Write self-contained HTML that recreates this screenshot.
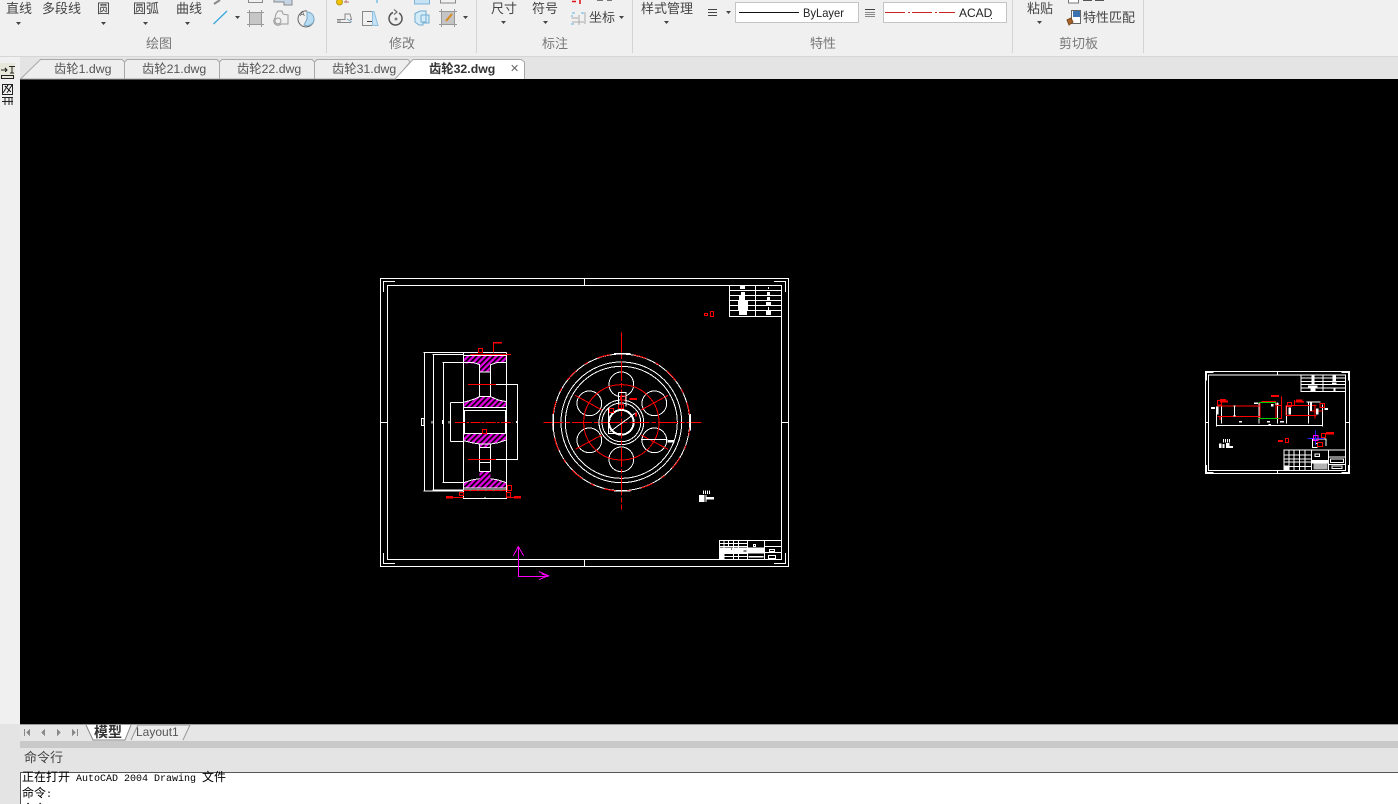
<!DOCTYPE html>
<html lang="zh"><head><meta charset="utf-8"><title>CAD</title>
<style>
html,body{margin:0;padding:0;background:#000}
#p{position:relative;width:1398px;height:804px;overflow:hidden;background:#000;font-family:"Liberation Sans","Noto Sans CJK SC",sans-serif;color:#444}
.a{position:absolute;white-space:nowrap}
.t{font-size:13px;line-height:16px;color:#444}
.g{font-size:13px;line-height:16px;color:#777}
.tab{font-size:12.3px;line-height:16px;color:#555}
.c{position:absolute;left:0;height:16px;line-height:16px;white-space:nowrap}
.c b{font-size:12px;font-weight:400;font-family:"WenQuanYi Zen Hei","Noto Sans CJK SC",sans-serif}
svg{position:absolute;left:0;top:0}
</style></head><body><div id="p">
<div class="a" style="left:0;top:0;width:1398px;height:57px;background:#f0f0f0;border-bottom:1px solid #d6d6d6;box-sizing:border-box"></div>
<div class="a" style="left:0;top:57px;width:1398px;height:22px;background:#e4e4e4"></div>
<div class="a" style="left:0;top:57px;width:20px;height:667px;background:#f0f0f0"></div>
<div class="a" style="left:0;top:724px;width:1398px;height:17px;background:#e6e6e6"></div>
<div class="a" style="left:0;top:741px;width:1398px;height:7px;background:#c9c9c9"></div>
<div class="a" style="left:0;top:748px;width:1398px;height:24px;background:#e4e4e4"></div>
<div class="a" style="left:0;top:724px;width:20px;height:80px;background:#e4e4e4"></div>
<div class="a" style="left:20px;top:772px;width:1378px;height:32px;background:#fff;border-top:1px solid #555;box-sizing:border-box"></div>

<svg width="1398" height="804" viewBox="0 0 1398 804" style="pointer-events:none">
<g stroke="#d4d4d4" fill="none" shape-rendering="crispEdges">
<path d="M326.500 0V53M476.500 0V53M632.500 0V53M1012.500 0V53M1143.500 0V53"/>
</g>
<!-- tabs -->
<g stroke="#a8a8a8" fill="#eeeeee">
<path d="M20.500 79 L40.500 59.500 H122 L124.500 62 V79Z" />
<path d="M124.500 79 V62 L127 59.500 H217 L219.500 62 V79Z"/>
<path d="M219.500 79 V62 L222 59.500 H312 L314.500 62 V79Z"/>
<path d="M314.500 79 V62 L317 59.500 H408 L410 62 L396 79Z"/>
</g>
<path d="M395 79 L413 59.500 H521 L524.500 62 V79" fill="#fff" stroke="#a8a8a8"/>
<!-- icons -->
<g fill="none" stroke="#8a8a8a" stroke-width="1">
<path d="M214 4 L220 0" stroke="#888" stroke-width="2"/>
<path d="M213.500 24 L227 11" stroke="#3aa7e0" stroke-width="1.300"/>
<path d="M248.500 0V2.500H262.500V0"/>
<path d="M274 0V2H284V5H292V0" fill="#c4d4e4"/>
<rect x="249.500" y="12.500" width="12" height="12" fill="#c6c6c6"/>
<path d="M247 12.500H264M247 24.500H264M249.500 10V27M261.500 10V27" stroke="#999"/>
<path d="M276 14 L278 11 H282 L283 14 L288 15 V19 L288 24 H281 A4 4 0 1 1 275 18Z" stroke="#999" fill="#f0f0f0"/>
<circle cx="278" cy="21" r="3" stroke="#999"/>
<path d="M307 11 A8 8 0 1 0 314 19" stroke="#666"/>
<path d="M307 12 A7 7 0 0 1 314 19 L314 20 A7 7 0 0 1 304 25 L307 19Z" fill="#b8dcf2" stroke="#7aa8c6"/>
<text x="300" y="16" font-size="7" fill="#555" stroke="none" font-family="Liberation Sans">A</text>
<circle cx="339.500" cy="2" r="3" fill="#f2c200" stroke="#b89a20"/>
<path d="M344 2H349M346 0V3" stroke="#b77"/>
<path d="M377 0V3" stroke="#3aa7e0"/>
<rect x="414.500" y="-4" width="15" height="8" fill="#c6e2f5" stroke="#7fb3d6"/>
<rect x="440.500" y="-4" width="15" height="7"/>
<path d="M337 22.500H351M337 19.500H345V14H350L351.500 19.500H350M337 21H341" stroke="#888"/>
<path d="M347 19 L352 22" stroke="#7aa8c6"/>
<rect x="362.500" y="11.500" width="10" height="14" stroke="#888"/>
<path d="M372.500 11.500H374L378 25.500H372.500Z" fill="#c6e2f5" stroke="#8fbfe0"/>
<path d="M367 21.500H372" stroke="#444"/>
<path d="M393 12.500 A6.500 6.500 0 1 0 399 13" stroke="#555" stroke-width="1.500"/>
<path d="M394 9.500 L397 12 L394 14.500" stroke="#555"/>
<circle cx="396" cy="19" r="1" fill="#555"/>
<path d="M415 13.500L420 11H426V15H429V23H423V25H419L415 22Z" stroke="#74aed0" fill="#d4ebf8"/>
<path d="M421 15H426M421 15V22H426V15" stroke="#74aed0"/>
<rect x="441.500" y="11.500" width="13" height="13" fill="#c4c4c4" stroke="#888"/>
<path d="M439 11.500H457M439 24.500H457M441.500 9V27M454.500 9V27" stroke="#999"/>
<path d="M446 21 L452 14" stroke="#d98a1e" stroke-width="2"/>
<path d="M572 1.500H576M580 0V4" stroke="#d11" stroke-width="1.500"/>
<path d="M597 0H603M607 0H612" stroke="#777" stroke-width="2"/>
<path d="M571.500 18H578M579 15V25M572 22H584M585 12V24" stroke="#aaa"/>
<path d="M572 13h3M581 13h3M571 24h3M571 16h2" stroke="#5fb4e4"/>
<path d="M708 9.500H717M708 12.500H717M708 15.500H717" stroke="#444"/>
<path d="M865 9.500H875" stroke="#444"/>
<path d="M865 12.500H875M865 14.500H875M865 16.500H875" stroke="#888"/>
<rect x="1068.500" y="-4" width="10" height="7" fill="#fff" stroke="#777"/>
<path d="M1083 0H1092M1095 0H1104" stroke="#555" stroke-width="2"/>
<rect x="1071.500" y="10.500" width="9" height="13" fill="#fff" stroke="#666"/>
<rect x="1073" y="11" width="7" height="6" fill="#3b72b0" stroke="none"/>
<path d="M1067 20L1071 18L1073 22L1069 25Z" fill="#a9622a" stroke="#7a4a20"/>
</g>
<!-- dropdown arrows -->
<g fill="#444">
<path d="M16 22h5l-2.500 3zM101 22h5l-2.500 3zM143 22h5l-2.500 3zM185 22h5l-2.500 3zM235 16h5l-2.500 3zM463 16h5l-2.500 3zM501 21h5l-2.500 3zM543 21h5l-2.500 3zM619 16h5l-2.500 3zM664 21h5l-2.500 3zM726 11h5l-2.500 3zM1037 21h5l-2.500 3z"/>
<path d="M849 12h5l-2.500 2.500zM996 12h5l-2.500 2.500z" fill="#777"/>
</g>
<rect x="735.500" y="2.500" width="123" height="20" fill="#fff" stroke="#c4c4c4"/>
<rect x="883.500" y="2.500" width="123" height="20" fill="#fff" stroke="#c4c4c4"/>
<path d="M739 12.500H799" stroke="#111" shape-rendering="crispEdges"/>
<path d="M885 12.500H905M908 12.500H910M912 12.500H932M935 12.500H937M939 12.500H955" stroke="#c22" shape-rendering="crispEdges"/>
<rect x="991" y="18" width="1" height="1" fill="#333"/>

<!-- left strip -->
<g fill="none" stroke="#222" shape-rendering="crispEdges">
<rect x="0" y="63" width="15" height="16" fill="#e8e8da" stroke="none"/>
<path d="M1 70H6M5 68L7 70L5 72M9 66.500H15M12 67V73M10 73H14" stroke-width="1.300"/>
<rect x="1.500" y="75.500" width="12" height="3"/>
<rect x="2.500" y="84.500" width="10" height="10"/><path d="M3 93L8 85M7 93L12 85M5 86L11 92"/>
<path d="M2 97.500H13M5 97V105M9 97V105M2 101.500H13M12 98V105"/>
</g>

<!-- bottom tabs -->
<g fill="#888" shape-rendering="crispEdges">
<path d="M24 729v7h1v-7zM30 729l-4 3.500 4 3.500z"/><path d="M45 729l-4 3.500 4 3.500z"/><path d="M57 729l4 3.500-4 3.500z"/><path d="M72 729l4 3.500-4 3.500zM77 729v7h1v-7z"/>
</g>
<path d="M86 725 L93 740 H125 L131 725" fill="#fff" stroke="#888"/>
<path d="M131 740 L138 725 H190 L183 740" fill="#ececec" stroke="#999"/>
<path d="M20 724.500H1398" stroke="#999" shape-rendering="crispEdges"/>
<path d="M20.500 773V804" stroke="#555" shape-rendering="crispEdges"/>
</svg>

<span class="a t" style="left:6px;top:1px">直线</span>
<span class="a t" style="left:42px;top:1px">多段线</span>
<span class="a t" style="left:97px;top:1px">圆</span>
<span class="a t" style="left:133px;top:1px">圆弧</span>
<span class="a t" style="left:176px;top:1px">曲线</span>
<span class="a t" style="left:491px;top:1px">尺寸</span>
<span class="a t" style="left:532px;top:1px">符号</span>
<span class="a t" style="left:589px;top:10px">坐标</span>
<span class="a t" style="left:641px;top:1px">样式管理</span>
<span class="a t" style="left:1027px;top:1px">粘贴</span>
<span class="a t" style="left:1083px;top:10px">特性匹配</span>
<span class="a" style="left:803px;top:5px;font-size:12px;line-height:16px;color:#222;transform:scaleX(.93);transform-origin:left">ByLayer</span>
<span class="a" style="left:959px;top:5px;font-size:12px;line-height:16px;color:#222">ACAD</span>
<span class="a g" style="left:146px;top:36px">绘图</span>
<span class="a g" style="left:389px;top:36px">修改</span>
<span class="a g" style="left:542px;top:36px">标注</span>
<span class="a g" style="left:810px;top:36px">特性</span>
<span class="a g" style="left:1059px;top:36px">剪切板</span>

<span class="a tab" style="left:54px;top:61px">齿轮1.dwg</span>
<span class="a tab" style="left:142px;top:61px">齿轮21.dwg</span>
<span class="a tab" style="left:237px;top:61px">齿轮22.dwg</span>
<span class="a tab" style="left:332px;top:61px">齿轮31.dwg</span>
<span class="a tab" style="left:429px;top:61px;font-weight:700;color:#333">齿轮32.dwg</span>
<span class="a" style="left:510px;top:61px;font-size:11px;line-height:16px;color:#666">✕</span>

<span class="a" style="left:94px;top:724px;font-size:14px;line-height:16px;font-weight:700;color:#333">模型</span>
<span class="a" style="left:136px;top:724px;font-size:12px;line-height:16px;color:#555">Layout1</span>
<span class="a" style="left:24px;top:750px;font-size:13px;line-height:16px;color:#444">命令行</span>

<div class="a" style="left:22px;top:769px;height:35px;width:400px;overflow:hidden;font-family:'Liberation Mono','Noto Sans CJK SC',monospace;font-size:10px;color:#000">
<div class="c" style="top:0"><b>正在打开</b> AutoCAD 2004 Drawing <b>文件</b></div>
<div class="c" style="top:16px"><b>命令</b>:</div>
<div class="c" style="top:32px"><b>命令</b>:</div>
</div>

<svg width="1398" height="804" viewBox="0 0 1398 804" style="pointer-events:none">
<defs>
<pattern id="h" width="12" height="12" patternUnits="userSpaceOnUse" patternTransform="rotate(45)">
<rect width="12" height="12" fill="#e000e0"/><rect width="5" height="12" fill="#000"/>
</pattern>
</defs>
<g fill="none" stroke="#fff" shape-rendering="crispEdges">
<rect x="380.500" y="278.500" width="408" height="288"/>
<rect x="387.500" y="285.500" width="394" height="274"/>
<path d="M584.500 278V285M584.500 559V566M381 422.500H387M782 422.500H788"/>
<path d="M383.500 292V281.500H395M383.500 553V563.500H395M785.500 292V281.500H774M785.500 553V563.500H774"/>
<rect x="729.500" y="285.500" width="52" height="31"/>
<path d="M755.500 285V316M730 290.500H781M730 295.500H781M730 300.500H781M730 305.500H781M730 310.500H781"/>
<g fill="#fff" stroke="none"><rect x="740" y="286" width="5" height="3"/><rect x="741" y="292" width="4" height="3"/><rect x="739" y="296" width="6" height="4"/><rect x="738" y="301" width="10" height="4"/><rect x="738" y="306" width="10" height="4"/><rect x="739" y="311" width="8" height="4"/><rect x="768" y="287" width="1" height="2"/><rect x="767" y="292" width="3" height="3"/><rect x="767" y="297" width="3" height="3"/><rect x="766" y="302" width="5" height="3"/><rect x="768" y="307" width="1" height="3"/><rect x="766" y="311" width="5" height="4"/></g>
<g stroke="#f00"><rect x="704.500" y="313.500" width="3" height="2"/><rect x="710.500" y="311.500" width="3" height="5"/></g>
<g transform="translate(530,320) scale(.33333)">
<g stroke-width="3">
<rect x="568" y="661" width="187" height="57"/>
<path d="M568 670H652M568 680H652M568 701H652M568 710H652M582 661V718M596 661V680M610 661V718M625 661V718M652 661V718M703 661V718M703 679H755M703 698H755"/>
<rect x="719" y="688" width="15" height="6"/><rect x="715" y="706" width="22" height="9"/>
<rect x="670" y="673" width="6" height="6"/>
</g>
<g fill="#fff" stroke="none"><rect x="568" y="682" width="135" height="14"/><rect x="568" y="696" width="84" height="5"/><rect x="654" y="690" width="49" height="10"/><rect x="568" y="702" width="12" height="16"/><rect x="655" y="708" width="45" height="5"/></g>
<g fill="#000" stroke="none"><rect x="603" y="684" width="2" height="6"/><rect x="640" y="692" width="10" height="2"/><rect x="658" y="700" width="2" height="8"/><rect x="665" y="700" width="2" height="8"/><rect x="672" y="700" width="2" height="8"/></g>
</g>

<g transform="translate(375,270) scale(.33333)">
<g fill="url(#h)" stroke="none">
<path d="M266 256H394V278H365L347 284V306H314V284L296 280H266Z"/>
<path d="M266 413H394V395L370 390L347 380H314L296 388L266 397Z"/>
<path d="M266 491H394V510L370 518L347 522V532H314V522L290 518L266 512Z"/>
<path d="M266 654H394V638L370 630L347 626V604H314V626L290 630L266 638Z"/>
</g>
<g stroke-width="3">
<path d="M145 248H395M148 248V663M145 663H265M172 253H265M175 253V660M172 660H395M202 278H265M205 278V637M202 637H265M226 397V514M226 397H265M226 514H265"/>
<path d="M265 248V685H395V248M266 256H394"/>
<path d="M266 278H296L314 284M394 278H365L347 284M314 284V380M347 284V380M314 306H347M266 397L296 388L314 380H347L370 390L394 395M266 413H394"/>
<path d="M268 421H391V490H268ZM266 491H394M266 512L290 518L314 522H347L370 518L394 510M314 522V604M347 522V604M314 532H347M314 577H347M314 604H347M266 638L290 630L314 626M394 638L370 630L347 626M266 654H394"/>
<path d="M363 343H428V568H363"/>
<rect x="139" y="445" width="8" height="22"/>
<path d="M171 453V461M202 450V462M222 453V461M425 453V459M328 682H332"/>
</g>
<g stroke="#f00" stroke-width="3" fill="none">
<path d="M285 253H408M279 343H363M279 568H363M355 248V218"/>
<path d="M240 457H414" stroke-dasharray="30 4 8 4"/>
<path d="M265 661H395" stroke-dasharray="20 3"/>
<rect x="310" y="235" width="12" height="13"/><rect x="322" y="478" width="12" height="13"/>
<rect x="397" y="646" width="13" height="15"/><rect x="394" y="667" width="13" height="14"/><rect x="253" y="667" width="12" height="10"/>
<path d="M234 682H265M395 682H417"/>
</g>
<g fill="#f00" stroke="none"><rect x="354" y="216" width="27" height="5"/><rect x="213" y="678" width="21" height="8"/><rect x="417" y="678" width="21" height="8"/></g>
<g stroke="#f0f" stroke-width="3" fill="none">
<path d="M430 830V919H520M415 857L430 830L446 857M492 905L520 917L492 929M500 912L520 918"/>
</g>
</g>

<g transform="translate(530,320) scale(.33333)" stroke-width="3">
<circle cx="274" cy="307" r="205"/>
<circle cx="274" cy="307" r="181"/><circle cx="274" cy="307" r="168"/>
<circle cx="274" cy="307" r="67"/><circle cx="274" cy="307" r="58"/>
<circle cx="274" cy="307" r="37" stroke-width="6"/>
<circle cx="274" cy="193" r="37"/><circle cx="274" cy="418" r="37"/><circle cx="178" cy="250" r="37"/><circle cx="373" cy="250" r="37"/><circle cx="178" cy="361" r="37"/><circle cx="373" cy="361" r="37"/>
<g stroke="#f00">
<circle cx="274" cy="307" r="206" stroke-dasharray="40 30 12 30"/>
<circle cx="274" cy="307" r="113"/>
<path d="M274 37V569" stroke-dasharray="60 6 14 6"/>
<path d="M40 307H515" stroke-dasharray="60 6 14 6"/>
<path d="M136 226L215 270M414 226L333 270M136 388L215 345M414 388L333 345"/>
<rect x="265" y="253" width="15" height="13"/><rect x="272" y="228" width="15" height="12"/><rect x="238" y="265" width="13" height="13"/>
<path d="M298 237H321M318 278V290" stroke-width="5"/>
</g>
<path d="M265 218H288V260M265 218V253M236 265V340H275M240 335L315 280M333 358H412" />
<path d="M252 101H302" stroke-width="4"/><path d="M70 282V332" stroke-width="4"/><path d="M481 282V332" stroke-width="4"/><path d="M252 513H302" stroke-width="2"/>
<g fill="#fff" stroke="none"><rect x="412" y="360" width="22" height="8"/>
<rect x="507" y="525" width="17" height="21"/><rect x="527" y="525" width="3" height="21"/><rect x="530" y="531" width="22" height="8"/>
<rect x="519" y="511" width="3" height="11"/><rect x="525" y="511" width="3" height="11"/><rect x="531" y="511" width="3" height="11"/><rect x="537" y="511" width="3" height="11"/></g>
</g>

<g transform="translate(1200,365) scale(.33333)" stroke-width="3">
<rect x="16" y="19" width="433" height="307"/>
<rect x="25" y="30" width="412" height="286"/>
<path d="M232 19V30M232 316V326M16 172H25M437 172H449M19 46V22H40M19 300V323H40M446 46V22H425M446 300V323H425"/>
<rect x="303" y="30" width="134" height="50"/>
<path d="M303 39H437M303 49H437M303 59H437M303 69H437M369 30V80"/>
<g fill="#fff" stroke="none"><rect x="334" y="32" width="10" height="26"/><rect x="324" y="62" width="28" height="7"/><rect x="332" y="70" width="14" height="8"/><rect x="398" y="32" width="10" height="18"/><rect x="396" y="52" width="14" height="8"/><rect x="400" y="70" width="6" height="8"/></g>
<rect x="252" y="255" width="185" height="61"/>
<path d="M252 270H335M252 282H335M252 291H335M252 304H335M267 255V316M282 255V316M298 255V316M315 255V316M335 255V316M385 255V316M385 276H437M385 298H437"/>
<g fill="#fff" stroke="none"><rect x="336" y="285" width="48" height="10"/><rect x="252" y="302" width="13" height="14"/><rect x="340" y="296" width="42" height="18" opacity=".7"/></g>
<rect x="345" y="267" width="14" height="7"/><rect x="391" y="282" width="40" height="11"/><rect x="396" y="303" width="30" height="8"/>
<path d="M49 185V124M49 181H368M64 122V176M104 121V155M177 112V176M232 112V176M259 122V176M325 112V176M368 118V185M320 111H362"/>
<g stroke="#f00"><path d="M52 123H180M52 155H180M180 112H228V160H180ZM228 122H245V160H228M245 94V160M258 122H350M258 152H350M258 122V152M284 105V122M345 118V160M330 138H368M60 155V165"/>
<rect x="52" y="106" width="12" height="14"/><rect x="262" y="112" width="13" height="12"/><rect x="360" y="115" width="14" height="13"/><rect x="364" y="205" width="12" height="12"/><rect x="352" y="233" width="15" height="12"/><rect x="256" y="220" width="10" height="13"/>
</g>
<g fill="#f00" stroke="none"><rect x="60" y="102" width="18" height="6"/><rect x="60" y="106" width="24" height="7"/><rect x="213" y="90" width="24" height="6"/><rect x="184" y="108" width="44" height="3"/><rect x="288" y="103" width="20" height="6"/><rect x="286" y="108" width="26" height="5"/><rect x="378" y="201" width="24" height="8"/><rect x="234" y="225" width="15" height="6"/></g>
<g stroke="#0c0"><path d="M175 112H228M175 160H236"/></g>
<g fill="#fff" stroke="none"><rect x="33" y="126" width="12" height="6"/><rect x="50" y="125" width="5" height="24"/><rect x="100" y="121" width="6" height="4"/><rect x="100" y="150" width="6" height="5"/><rect x="117" y="168" width="9" height="4"/><rect x="162" y="113" width="12" height="4"/><rect x="213" y="117" width="8" height="8"/><rect x="225" y="115" width="12" height="4"/><rect x="201" y="168" width="9" height="4"/><rect x="240" y="168" width="12" height="4"/><rect x="205" y="177" width="8" height="3"/><rect x="266" y="128" width="7" height="20"/><rect x="330" y="113" width="6" height="25"/><rect x="348" y="130" width="8" height="18"/><rect x="374" y="129" width="10" height="6"/>
<rect x="69" y="222" width="3" height="10"/><rect x="75" y="222" width="3" height="10"/><rect x="81" y="222" width="3" height="10"/><rect x="87" y="222" width="3" height="10"/>
<rect x="57" y="235" width="8" height="14"/><rect x="67" y="237" width="7" height="12"/><rect x="78" y="234" width="10" height="15"/><rect x="88" y="243" width="11" height="6"/></g>
<path d="M337 222V247H353M337 222H378V243M345 235H353"/>
<path d="M322 220H372M347 197V240" stroke="#22f"/>
<rect x="340" y="212" width="14" height="14" stroke="#f0f"/>
</g>
</g>
</svg>
</div></body></html>
